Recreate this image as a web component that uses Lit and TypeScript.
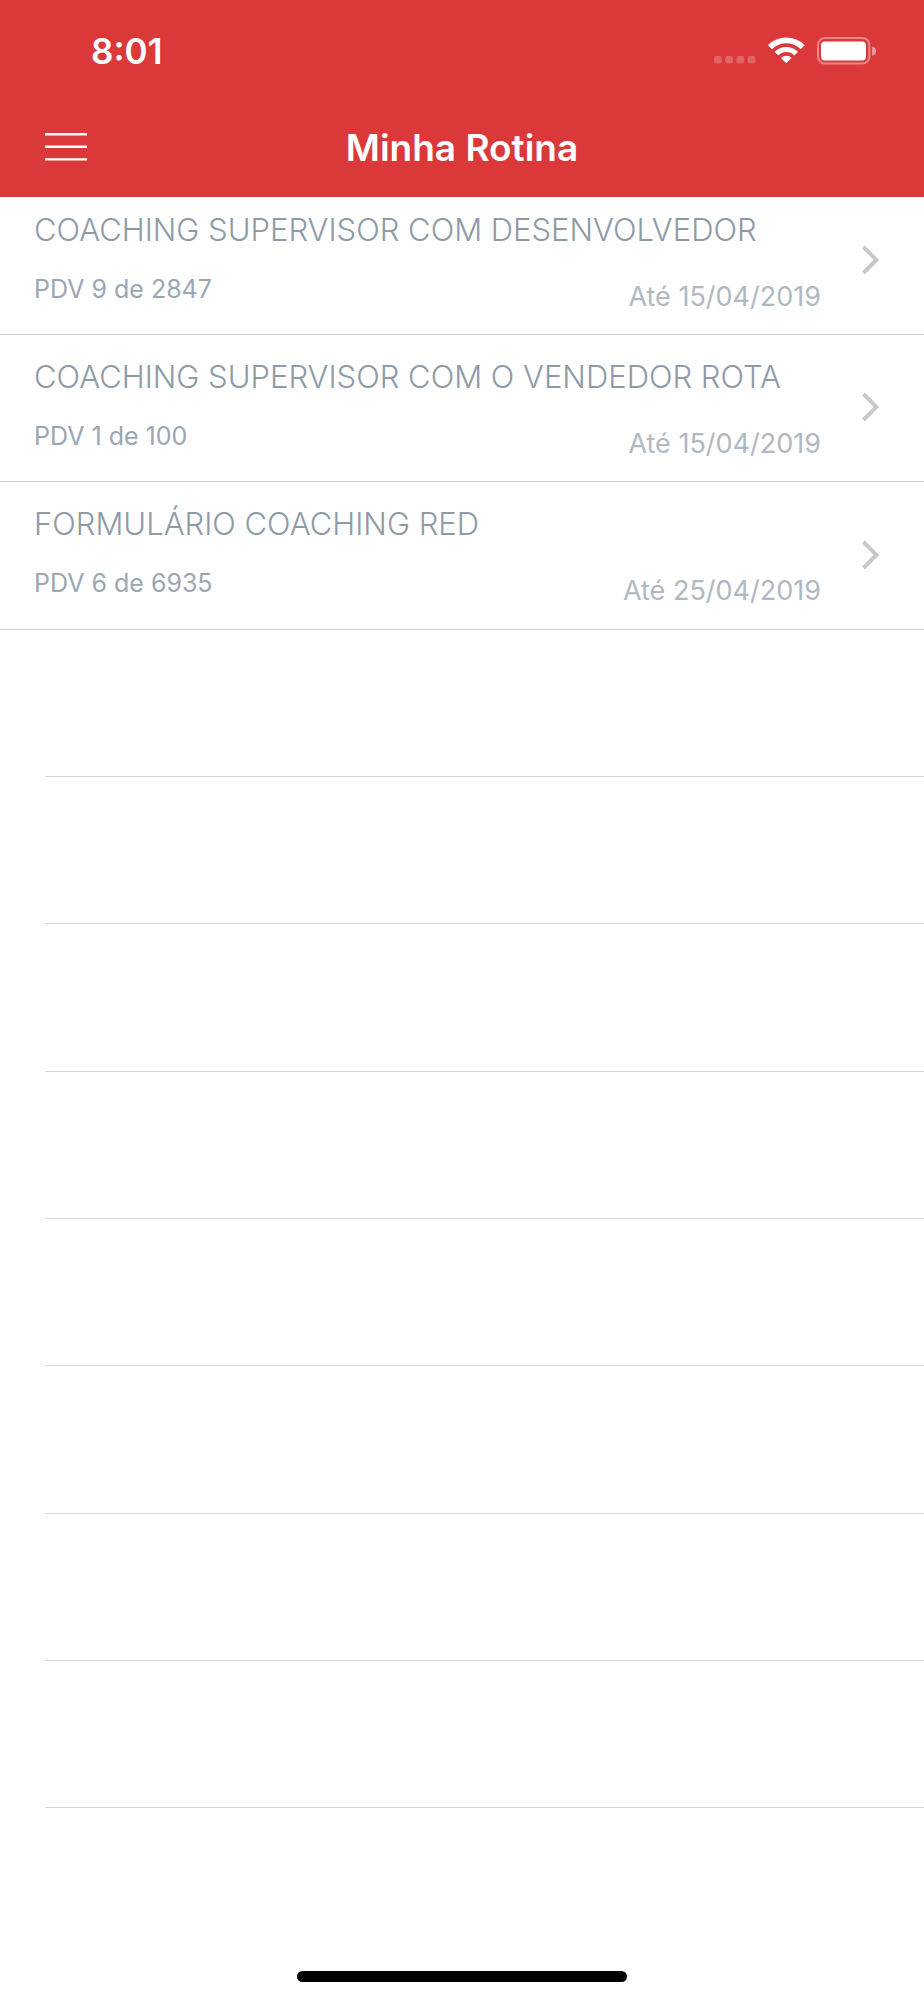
import { LitElement, html, css } from "lit";
import { customElement, property } from "lit/decorators.js";

interface Routine {
  title: string;
  progress: string;
  due: string;
}

const ROUTINES: Routine[] = [
  { title: "COACHING SUPERVISOR COM DESENVOLVEDOR", progress: "PDV 9 de 2847", due: "Até 15/04/2019" },
  { title: "COACHING SUPERVISOR COM O VENDEDOR ROTA", progress: "PDV 1 de 100", due: "Até 15/04/2019" },
  { title: "FORMULÁRIO COACHING RED", progress: "PDV 6 de 6935", due: "Até 25/04/2019" },
];

const EMPTY_ROWS = 8;

@customElement("status-bar")
class StatusBar extends LitElement {
  static styles = css`
    :host {
      display: flex;
      align-items: center;
      justify-content: space-between;
      box-sizing: border-box;
      height: 98px;
      padding: 3px 47px 0 91px;
    }
    .time {
      font-size: 35px;
      font-weight: 600;
      line-height: 42px;
    }
    .icons {
      display: flex;
      align-items: center;
      gap: 12px;
    }
    .icons svg {
      display: block;
    }
  `;

  render() {
    return html`
      <span class="time">8:01</span>
      <div class="icons">
        <svg width="42" height="27" viewBox="0 0 42 27" fill="#fff" fill-opacity="0.22" aria-hidden="true">
          <rect x="0" y="19" width="7.8" height="7.6" rx="2.4" />
          <rect x="11.2" y="19" width="7.8" height="7.6" rx="2.4" />
          <rect x="22.4" y="19" width="7.8" height="7.6" rx="2.4" />
          <rect x="33.6" y="19" width="7.8" height="7.6" rx="2.4" />
        </svg>
        <svg width="37" height="27" viewBox="0 0 37 27" fill="none" stroke="#fff" aria-hidden="true">
          <path d="M2 10.2a23.1 23.1 0 0 1 32.6 0" stroke-width="5.8" />
          <path d="M8.4 16.6a14 14 0 0 1 19.8 0" stroke-width="5.2" />
          <path d="M18.3 26.2 13 20.9a7.5 7.5 0 0 1 10.6 0Z" fill="#fff" stroke="none" />
        </svg>
        <svg width="60" height="28" viewBox="0 0 60 28" aria-hidden="true">
          <rect x="1" y="1" width="51.4" height="25.6" rx="7" fill="none" stroke="#fff" stroke-opacity="0.4" stroke-width="2" />
          <rect x="4" y="4.4" width="45" height="19" rx="4" fill="#fff" />
          <path d="M55.2 9.4a4.8 4.8 0 0 1 0 9.4Z" fill="#fff" fill-opacity="0.5" />
        </svg>
      </div>
    `;
  }
}

@customElement("routine-row")
class RoutineRow extends LitElement {
  @property({ attribute: false }) routine!: Routine;

  static styles = css`
    :host {
      display: block;
      height: 100%;
    }
    .row {
      display: flex;
      align-items: center;
      height: 100%;
      box-sizing: border-box;
      padding: 0 44px 2px 34px;
      color: #9ca6b2;
      text-decoration: none;
    }
    .body {
      flex: 1;
      min-width: 0;
      align-self: stretch;
      box-sizing: border-box;
      padding: 23px 0 0;
      display: flex;
      flex-direction: column;
      gap: 26px;
    }
    .title {
      font-size: 31px;
      font-weight: 300;
      line-height: 38px;
      white-space: nowrap;
      color: #8f9aa7;
    }
    .meta {
      display: flex;
      justify-content: space-between;
      align-items: flex-start;
      padding-right: 41px;
    }
    .progress {
      font-size: 25px;
      line-height: 28px;
    }
    .due {
      font-size: 27px;
      line-height: 44px;
      color: #b0b8c1;
    }
    .chevron {
      display: block;
      flex: none;
    }
  `;

  render() {
    return html`
      <a class="row" href="#">
        <span class="body">
          <span class="title">${this.routine.title}</span>
          <span class="meta">
            <span class="progress">${this.routine.progress}</span>
            <span class="due">${this.routine.due}</span>
          </span>
        </span>
        <svg class="chevron" width="18" height="30" viewBox="0 0 18 30" fill="none" stroke="#c7c7cc" stroke-width="4" aria-hidden="true">
          <path d="M1.4 1.8 14.4 14.9 1.4 28" />
        </svg>
      </a>
    `;
  }
}

@customElement("app-root")
class AppRoot extends LitElement {
  static styles = css`
    :host {
      display: flex;
      flex-direction: column;
      min-height: 100vh;
      background: #fff;
      color: #fff;
      font-family: Inter, "Liberation Sans", sans-serif;
    }
    .top {
      position: sticky;
      top: 0;
      z-index: 1;
      background: #db383a;
    }
    .nav {
      display: grid;
      grid-template-columns: 1fr auto 1fr;
      align-items: center;
      height: 99px;
      padding: 0 45px;
    }
    .menu {
      justify-self: start;
      padding: 0;
      border: 0;
      background: none;
      cursor: pointer;
    }
    .menu svg {
      display: block;
    }
    .heading {
      margin: 0;
      font-size: 37px;
      font-weight: 600;
      line-height: 44px;
    }
    /* The first row starts slightly scrolled under the bar. */
    .list {
      flex: 1;
      margin: -9px 0 0;
      padding: 0;
      list-style: none;
    }
    .item {
      box-sizing: border-box;
      height: 147px;
      border-bottom: 1px solid #d0d0d3;
    }
    .item:nth-child(3n) {
      height: 148px;
    }
    .item.empty {
      margin-left: 45px;
      border-bottom-color: #d8d8dc;
    }
    .home {
      flex: none;
      align-self: center;
      width: 330px;
      height: 11px;
      margin-bottom: 18px;
      border-radius: 6px;
      background: #000;
    }
  `;

  render() {
    return html`
      <header class="top">
        <status-bar></status-bar>
        <nav class="nav">
          <button class="menu" type="button" aria-label="Menu">
            <svg width="42" height="30" viewBox="0 0 42 30" fill="none" stroke="#fff" stroke-width="2.4">
              <path d="M0 1.2h42M0 13.8h42M0 26.4h42" />
            </svg>
          </button>
          <h1 class="heading">Minha Rotina</h1>
        </nav>
      </header>
      <ul class="list">
        ${ROUTINES.map((r) => html`<li class="item"><routine-row .routine=${r}></routine-row></li>`)}
        ${Array.from({ length: EMPTY_ROWS }, () => html`<li class="item empty" aria-hidden="true"></li>`)}
      </ul>
      <div class="home"></div>
    `;
  }
}
